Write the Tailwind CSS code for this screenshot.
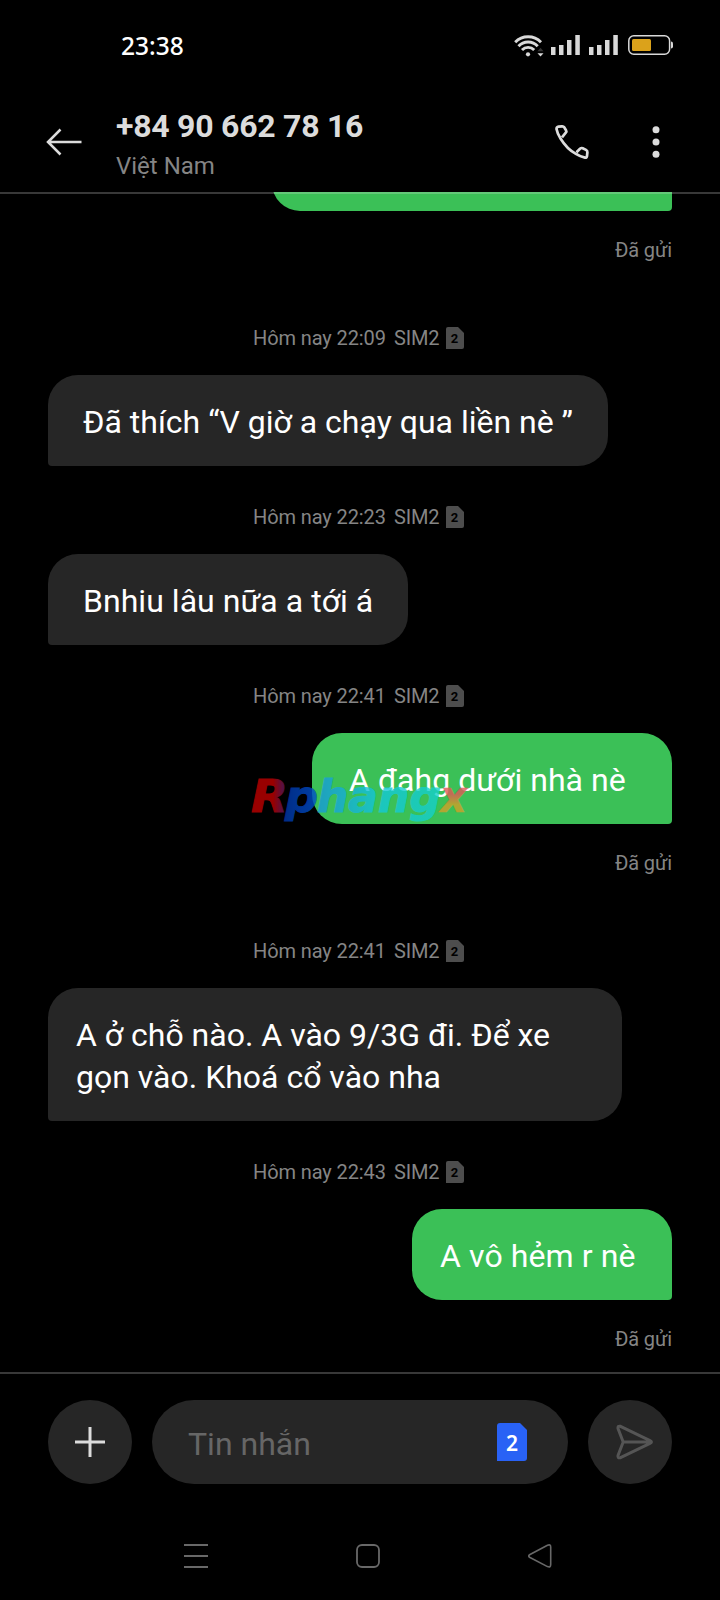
<!DOCTYPE html>
<html lang="vi">
<head>
<meta charset="utf-8">
<title>Tin nhắn</title>
<script src="https://cdn.jsdelivr.net/npm/@tailwindcss/browser@4"></script>
</head>
<body class="bg-black">
<svg class="hidden">
  <symbol id="sim" viewBox="0 0 18 22"><path d="M2 0H12L18 6V20a2 2 0 0 1-2 2H0V2a2 2 0 0 1 2-2z" fill="currentColor"/></symbol>
  <symbol id="bars" viewBox="0 0 29 20"><path d="M0 12h4.500v8H0zM8 10h4.500v10H8zM16 5h4.500v15H16zM24.300 0h4.500v20h-4.500z" fill="#d9d9d9"/></symbol>
</svg>
<div class="relative flex h-[1600px] w-[720px] flex-col overflow-hidden bg-black font-['Roboto',sans-serif] text-white">

  <!-- Status bar -->
  <div class="flex h-[88px] shrink-0 items-center pr-[47px] pl-[121px]">
    <div class="mt-[3px] flex-1 font-['Noto_Sans',sans-serif] text-[24.500px] font-medium leading-[30px]">23:38</div>
    <svg class="mt-1 h-[24px] w-[31px]" viewBox="0 0 31 24" fill="none" stroke="#d9d9d9" stroke-width="2.900">
      <path d="M1.200 8.200a18 18 0 0 1 25.800 0M4.500 12.200a13 13 0 0 1 19.200 0M8 16a8.500 8.500 0 0 1 12.200 0"/>
      <circle cx="14" cy="20.300" r="2.100" fill="#d9d9d9" stroke="none"/>
      <path d="M23.500 17.200h6l-3-3.500z" fill="#333" stroke="none"/><path d="M23.500 19.300h6l-3 3.300z" fill="#d9d9d9" stroke="none"/>
    </svg>
    <svg class="mt-[2px] ml-[6px] h-5 w-[29px]"><use href="#bars"/></svg>
    <svg class="mt-[2px] ml-[9px] h-5 w-[29px]"><use href="#bars"/></svg>
    <svg class="mt-[2px] ml-[10px] h-5 w-[45px]" viewBox="0 0 45 20"><rect x=".8" y=".8" width="40.800" height="18.400" rx="5" fill="none" stroke="#d9d9d9" stroke-width="1.500"/><rect x="4" y="4" width="19" height="12" rx="1.500" fill="#dba21b"/><path d="M43 6.500q2 0 2 2v3q0 2-2 2z" fill="#d9d9d9"/></svg>
  </div>

  <!-- Header -->
  <div class="flex h-[104px] shrink-0 pl-[46px]">
    <svg class="mt-10 h-[28px] w-[36px]" viewBox="0 0 36 28" fill="none" stroke="#dcdcdc" stroke-width="2.500"><path d="M14.500 1.500 2 14 14.500 26.500M2 14H35.500"/></svg>
    <div class="ml-[34px] flex-1">
      <div class="mt-[18px] whitespace-nowrap text-[32px] font-bold leading-[40px] tracking-[-0.25px] text-[#dcdcdc]">+84 90 662 78 16</div>
      <div class="mt-[5px] text-[24px] leading-[30px] text-[#858585]">Việt Nam</div>
    </div>
    <svg class="mt-8 h-[44px] w-[44px]" viewBox="0 0 44 44" fill="none" stroke="#dcdcdc" stroke-width="2.700" stroke-linejoin="round"><path d="M12 17.300L15.800 12.600Q16.800 11.500 16 10.200L14.200 7.300Q13.500 6.200 12 6.300L8.500 6.700Q6.500 7 6.500 9Q7.500 14 10.500 18.500Q17 29 25.500 33.600Q30 36.500 35 37.600Q36.800 37.900 37 36L37.400 32.300Q37.500 30.700 36 29.900L32.700 28.200Q31.300 27.600 30 28.800L26.500 32.300"/></svg>
    <svg class="mt-9 mr-[54px] ml-[52px] h-[36px] w-[20px]" viewBox="0 0 20 36" fill="#dcdcdc"><circle cx="10" cy="5.800" r="3.500"/><circle cx="10" cy="18" r="3.500"/><circle cx="10" cy="30.200" r="3.500"/></svg>
  </div>

  <!-- Conversation -->
  <div class="relative flex h-[1180px] shrink-0 flex-col overflow-hidden px-12">
    <div class="absolute inset-x-0 top-0 z-10 h-[2px] bg-[#e0e0e0]/25"></div>
    <div class="-mt-[72px] h-[91px] w-[400px] shrink-0 self-end rounded-[28px] rounded-br-[4px] bg-[#3bc057]"></div>
    <div class="mt-[26px] self-end text-[20px] leading-[26px] tracking-[-0.1px] text-[#858585]">Đã gửi</div>

    <div class="mt-[62px] ml-[205px] flex h-[26px] items-center text-[20px] tracking-[-0.1px] text-[#858585]"><span>Hôm nay 22:09</span><span class="ml-2">SIM2</span><span class="relative ml-[6px] flex h-[22px] w-[18px] items-center justify-center text-[#4d4d4d]"><svg class="absolute inset-0 h-full w-full"><use href="#sim"/></svg><b class="relative text-[13px] leading-none text-black">2</b></span></div>
    <div class="mt-[24px] h-[91px] w-[560px] shrink-0 rounded-[30px] rounded-bl-[4px] bg-[#262626] pt-[26px] pl-[35px] text-[32px] leading-[42px] whitespace-nowrap">Đã thích “V giờ a chạy qua liền nè ”</div>

    <div class="mt-[38px] ml-[205px] flex h-[26px] items-center text-[20px] tracking-[-0.1px] text-[#858585]"><span>Hôm nay 22:23</span><span class="ml-2">SIM2</span><span class="relative ml-[6px] flex h-[22px] w-[18px] items-center justify-center text-[#4d4d4d]"><svg class="absolute inset-0 h-full w-full"><use href="#sim"/></svg><b class="relative text-[13px] leading-none text-black">2</b></span></div>
    <div class="mt-[24px] h-[91px] w-[360px] shrink-0 rounded-[30px] rounded-bl-[4px] bg-[#262626] pt-[26px] pl-[35px] text-[32px] leading-[42px] tracking-[0.04px] whitespace-nowrap">Bnhiu lâu nữa a tới á</div>

    <div class="mt-[38px] ml-[205px] flex h-[26px] items-center text-[20px] tracking-[-0.1px] text-[#858585]"><span>Hôm nay 22:41</span><span class="ml-2">SIM2</span><span class="relative ml-[6px] flex h-[22px] w-[18px] items-center justify-center text-[#4d4d4d]"><svg class="absolute inset-0 h-full w-full"><use href="#sim"/></svg><b class="relative text-[13px] leading-none text-black">2</b></span></div>
    <div class="mt-[24px] h-[91px] w-[360px] shrink-0 self-end rounded-[30px] rounded-br-[4px] bg-[#3bc057] pt-[26px] pl-[37px] text-[32px] leading-[42px] tracking-[0.04px] whitespace-nowrap">A đahg dưới nhà nè</div>
    <div class="mt-[26px] self-end text-[20px] leading-[26px] tracking-[-0.1px] text-[#858585]">Đã gửi</div>

    <div class="mt-[62px] ml-[205px] flex h-[26px] items-center text-[20px] tracking-[-0.1px] text-[#858585]"><span>Hôm nay 22:41</span><span class="ml-2">SIM2</span><span class="relative ml-[6px] flex h-[22px] w-[18px] items-center justify-center text-[#4d4d4d]"><svg class="absolute inset-0 h-full w-full"><use href="#sim"/></svg><b class="relative text-[13px] leading-none text-black">2</b></span></div>
    <div class="mt-[24px] h-[133px] w-[574px] shrink-0 rounded-[30px] rounded-bl-[4px] bg-[#262626] pt-[26px] pl-[28px] text-[32px] leading-[42px] whitespace-nowrap">A ở chỗ nào. A vào 9/3G đi. Để xe<br>gọn vào. Khoá cổ vào nha</div>

    <div class="mt-[38px] ml-[205px] flex h-[26px] items-center text-[20px] tracking-[-0.1px] text-[#858585]"><span>Hôm nay 22:43</span><span class="ml-2">SIM2</span><span class="relative ml-[6px] flex h-[22px] w-[18px] items-center justify-center text-[#4d4d4d]"><svg class="absolute inset-0 h-full w-full"><use href="#sim"/></svg><b class="relative text-[13px] leading-none text-black">2</b></span></div>
    <div class="mt-[24px] h-[91px] w-[260px] shrink-0 self-end rounded-[30px] rounded-br-[4px] bg-[#3bc057] pt-[26px] pl-[28px] text-[32px] leading-[42px] tracking-[0.1px] whitespace-nowrap">A vô hẻm r nè</div>
    <div class="mt-[26px] self-end text-[20px] leading-[26px] tracking-[-0.1px] text-[#858585]">Đã gửi</div>
  </div>

  <!-- Composer -->
  <div class="flex h-[128px] shrink-0 gap-5 border-t-2 border-[#383838] px-12 pt-[26px]">
    <div class="flex size-[84px] items-center justify-center rounded-full bg-[#262626]"><svg class="size-[30px]" viewBox="0 0 30 30" stroke="#dcdcdc" stroke-width="3"><path d="M15 0V30M0 15H30"/></svg></div>
    <div class="flex h-[84px] flex-1 items-center rounded-full bg-[#262626] pr-[41px] pl-[36px]">
      <span class="mt-[4px] flex-1 text-[32px] text-[#666]">Tin nhắn</span>
      <span class="relative flex h-[38px] w-[30px] items-center justify-center font-['Noto_Sans',sans-serif] text-[21px] font-semibold"><svg class="absolute inset-0" width="30" height="38" viewBox="0 0 30 38"><path d="M3 0H23L30 7V35a3 3 0 0 1-3 3H0V3a3 3 0 0 1 3-3z" fill="#2962f5"/></svg><span class="relative mt-[2px] leading-none">2</span></span>
    </div>
    <div class="flex size-[84px] items-center justify-center rounded-full bg-[#262626]"><svg class="ml-[9px] h-[36px] w-[38px]" viewBox="0 0 38 36" fill="none" stroke="#555" stroke-width="3" stroke-linejoin="round"><path d="M4.500 2.300 34 16.600Q37 18 34 19.400L4.500 33.700Q1.500 34.500 2 31.500L7.200 18 2 4.500Q1.500 1.500 4.500 2.300ZM7.200 18H35"/></svg></div>
  </div>

  <!-- Navigation bar -->
  <div class="flex h-[100px] shrink-0 items-center pl-[184px]">
    <svg class="mt-[12px] h-6 w-6" viewBox="0 0 24 24" stroke="#686868" stroke-width="2"><path d="M0 1H24M0 12H24M0 23H24"/></svg>
    <svg class="mt-[12px] ml-[148px] h-6 w-6" viewBox="0 0 24 24" fill="none" stroke="#686868" stroke-width="1.800"><rect x="1" y="1" width="22" height="22" rx="5"/></svg>
    <svg class="mt-[12px] ml-[148px] h-6 w-6" viewBox="0 0 24 24" fill="none" stroke="#686868" stroke-width="1.600" stroke-linejoin="round"><path d="M2 10.500 19.500 1.200Q22.700 0 22.700 3V20.500Q22.700 24 19.500 22.600L2 13.500Q-.5 12 2 10.500Z"/></svg>
  </div>

  <!-- Watermark -->
  <svg class="absolute top-[760px] left-[240px] z-20 h-[80px] w-[240px] font-['DejaVu_Sans',sans-serif] text-[45px] font-bold italic opacity-80" viewBox="0 0 240 80" stroke-width="1">
    <defs>
      <linearGradient id="wr"><stop offset=".6" stop-color="#c00000"/><stop offset="1" stop-color="#402080"/></linearGradient>
      <linearGradient id="wb"><stop offset="0" stop-color="#0038a8"/><stop offset="1" stop-color="#0050d0"/></linearGradient>
      <linearGradient id="wc"><stop offset="0" stop-color="#1898d8"/><stop offset=".5" stop-color="#14c8d8"/><stop offset="1" stop-color="#16d0c8"/></linearGradient>
      <linearGradient id="wx" x1="0" y1="0" x2="0" y2="1"><stop offset=".45" stop-color="#e05858"/><stop offset=".65" stop-color="#d0a028"/></linearGradient>
    </defs>
    <text x="11" y="52" textLength="37" lengthAdjust="spacingAndGlyphs" fill="url(#wr)" stroke="url(#wr)">R</text>
    <text x="45" y="52" textLength="33" lengthAdjust="spacingAndGlyphs" fill="url(#wb)" stroke="url(#wb)">p</text>
    <text x="77" y="52" textLength="124" lengthAdjust="spacingAndGlyphs" fill="url(#wc)" stroke="url(#wc)">hang</text>
    <text x="200" y="52" textLength="27" lengthAdjust="spacingAndGlyphs" fill="url(#wx)" stroke="url(#wx)" stroke-width=".3">x</text>
  </svg>
</div>
</body>
</html>
